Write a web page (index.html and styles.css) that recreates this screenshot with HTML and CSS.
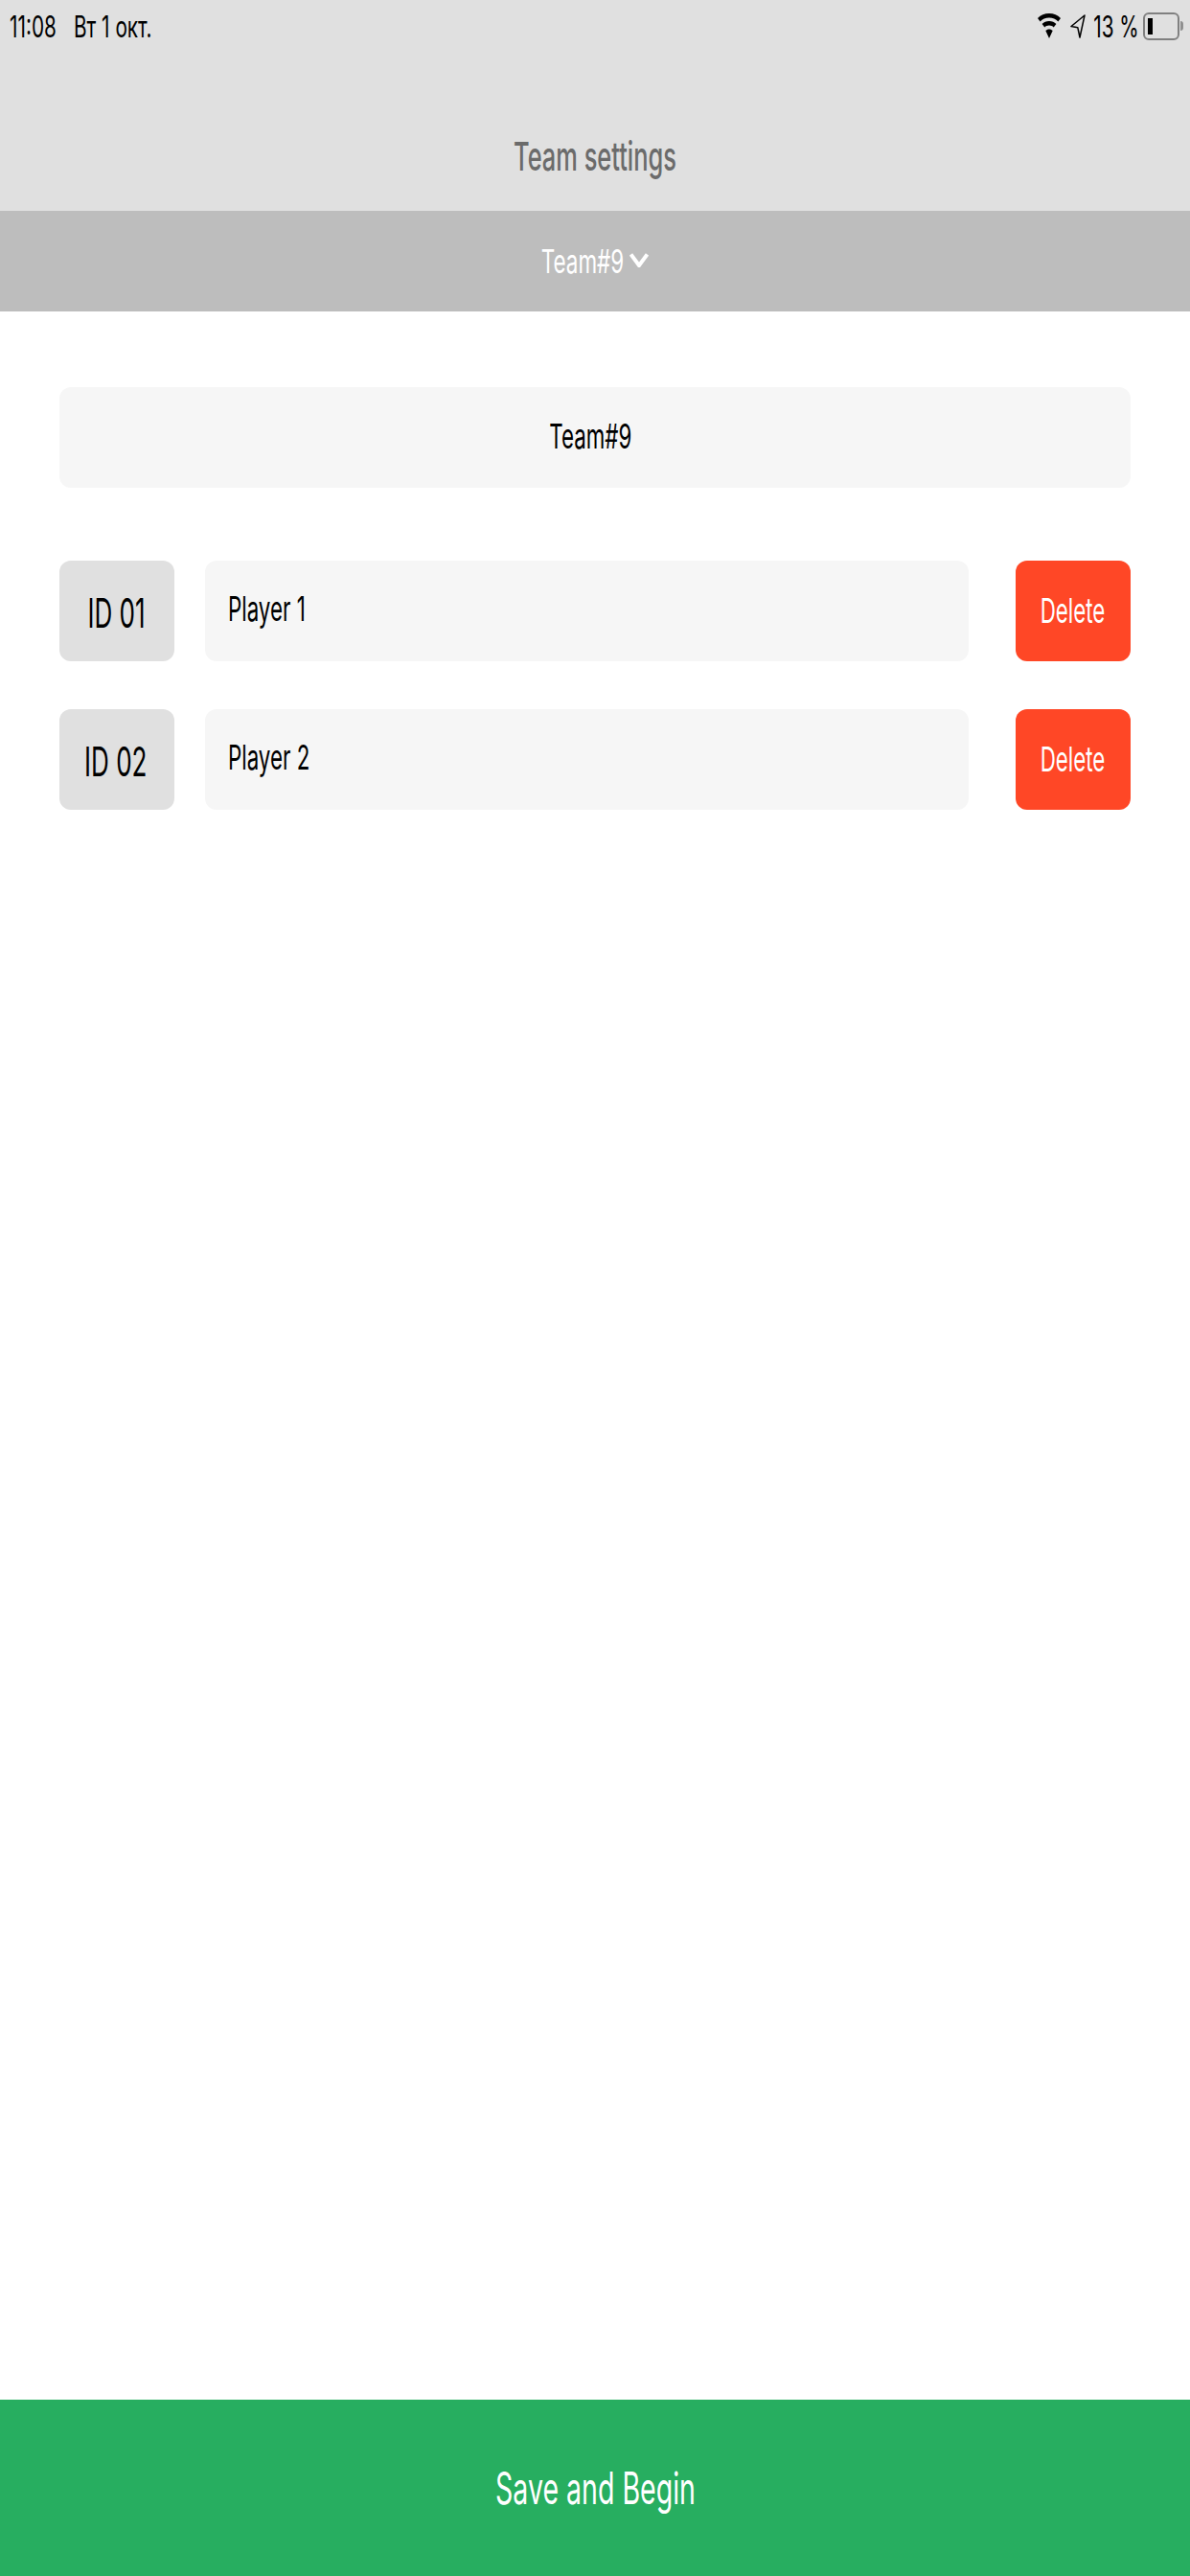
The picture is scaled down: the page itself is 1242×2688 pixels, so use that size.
FILE: index.html
```html
<!DOCTYPE html>
<html lang="en">
<head>
    <meta charset="UTF-8">
    <title>Team settings</title>
    <link rel="stylesheet" href="styles.css">
</head>
<body>

<div class="page">
    <div class="top-header">
        <div class="status-bar">
            <div class="status-left">
                <span class="narrow status-text status-time">11:08</span>
                <span class="narrow status-text status-date">Вт 1 окт.</span>
            </div>
            <div class="status-right">
                <svg class="wifi-icon" viewBox="0 0 24 26">
                    <path d="M12 0C7.2 0 3.2 1.8 0 5l2.6 3.4C5 5.9 8.2 4.5 12 4.5s7 1.4 9.4 3.9L24 5C20.8 1.8 16.8 0 12 0z"/>
                    <path d="M12 8c-3 0-5.500 1.100-7.400 3l2.700 3.400C8.500 13.200 10.100 12.500 12 12.500s3.500.7 4.700 1.900L19.400 11C17.500 9.100 15 8 12 8z"/>
                    <path d="M12 16.500c-1.500 0-2.800.6-3.700 1.500L12 26l3.700-8c-.9-.9-2.200-1.500-3.700-1.500z"/>
                </svg>
                <svg class="location-icon" viewBox="0 0 16 25">
                    <path d="M15 1 1 12.500l6.800 1.200L10 24z"/>
                </svg>
                <span class="narrow status-text status-battery-text">13 %</span>
                <div class="battery">
                    <div class="battery-level"></div>
                </div>
                <div class="battery-nub"></div>
            </div>
        </div>
        <div class="page-title"><span class="narrow">Team settings</span></div>
    </div>

    <div class="team-select">
        <span class="narrow team-select-name">Team#9</span>
        <svg class="chevron-icon" viewBox="0 0 20 15">
            <path d="M1.500 1.500 10 13l8.500-11.500"/>
        </svg>
    </div>

    <div class="content">
        <div class="team-name"><span class="narrow">Team#9</span></div>

        <div class="player-row">
            <div class="player-id"><span class="narrow">ID 01</span></div>
            <div class="player-name"><span class="narrow">Player 1</span></div>
            <button class="delete-button"><span class="narrow">Delete</span></button>
        </div>
        <div class="player-row">
            <div class="player-id"><span class="narrow">ID 02</span></div>
            <div class="player-name"><span class="narrow">Player 2</span></div>
            <button class="delete-button"><span class="narrow">Delete</span></button>
        </div>
    </div>

    <button class="save-button"><span class="narrow">Save and Begin</span></button>
</div>

</body>
</html>
```

FILE: styles.css
```css
* {
    box-sizing: border-box;
}

html, body {
    margin: 0;
    height: 100%;
}

body {
    background-color: #fff;
    font-family: Inter, Roboto, "Liberation Sans", sans-serif;
    color: #000;
}

.page {
    height: 2688px;
    display: flex;
    flex-direction: column;
}

/* The screenshot is squeezed sideways, so all text is too */
.narrow {
    display: inline-block;
    transform: scaleX(0.62);
    white-space: nowrap;
}

.top-header {
    height: 220px;
    background-color: #e0e0e0;
    display: flex;
    flex-direction: column;
}

.status-bar {
    height: 54px;
    padding: 0 7px 0 10px;
    display: flex;
    justify-content: space-between;
    align-items: center;
    font-size: 31px;
}

.status-left {
    display: flex;
    gap: 19px;
}

.status-left .narrow {
    transform-origin: left center;
}

.status-text {
    transform: scaleX(0.67);
}

.status-time {
    width: 48px;
}

.status-right {
    display: flex;
    align-items: center;
}

.wifi-icon {
    width: 24px;
    height: 26px;
}

.location-icon {
    width: 16px;
    height: 25px;
    margin-left: 10px;
    fill: none;
    stroke: #000;
    stroke-width: 1.500;
    stroke-linejoin: round;
}

.status-battery-text {
    width: 44px;
    margin-left: 10px;
    display: flex;
    justify-content: center;
}

.battery {
    width: 38px;
    height: 29px;
    margin-left: 6px;
    padding: 4px 3px;
    border: 2px solid #808080;
    border-radius: 6px;
}

.battery-level {
    width: 5px;
    height: 100%;
    background-color: #000;
}

.battery-nub {
    width: 3px;
    height: 10px;
    margin-left: 1px;
    background-color: #909090;
    border-radius: 0 3px 3px 0;
}

.page-title {
    flex: 1;
    display: flex;
    justify-content: center;
    align-items: center;
    padding-top: 52px;
    font-size: 41px;
    font-weight: 500;
    color: #6b6b6b;
}

.team-select {
    height: 105px;
    background-color: #bdbdbd;
    color: #fff;
    display: flex;
    justify-content: center;
    align-items: center;
    font-size: 34px;
}

.team-select-name {
    width: 84px;
    display: flex;
    justify-content: center;
    transform: scaleX(0.66);
}

.chevron-icon {
    width: 20px;
    height: 15px;
    margin-left: 7px;
    margin-top: -2px;
    fill: none;
    stroke: #fff;
    stroke-width: 4;
}

.content {
    flex: 1;
    padding: 79px 62px 0;
}

.team-name {
    height: 105px;
    margin-bottom: 76px;
    padding-right: 10px;
    padding-bottom: 3px;
    background-color: #f6f6f6;
    border-radius: 12px;
    display: flex;
    justify-content: center;
    align-items: center;
    font-size: 36px;
}

.player-row {
    height: 105px;
    margin-bottom: 50px;
    display: flex;
}

.player-id {
    width: 120px;
    margin-right: 32px;
    padding-top: 4px;
    padding-right: 2px;
    background-color: #e0e0e0;
    border-radius: 12px;
    display: flex;
    justify-content: center;
    align-items: center;
    font-size: 42px;
}

.player-name {
    width: 797px;
    margin-right: 49px;
    padding-left: 24px;
    padding-bottom: 6px;
    background-color: #f6f6f6;
    border-radius: 12px;
    display: flex;
    align-items: center;
    font-size: 36px;
}

.player-name .narrow {
    transform-origin: left center;
}

.delete-button {
    width: 120px;
    padding: 0 0 2px;
    border: none;
    background-color: #ff4726;
    border-radius: 12px;
    color: #fff;
    font-family: inherit;
    font-size: 36px;
    display: flex;
    justify-content: center;
    align-items: center;
}

.save-button {
    height: 184px;
    padding: 0;
    border: none;
    background-color: #27ae60;
    color: #fff;
    font-family: inherit;
    font-size: 46px;
}
```
